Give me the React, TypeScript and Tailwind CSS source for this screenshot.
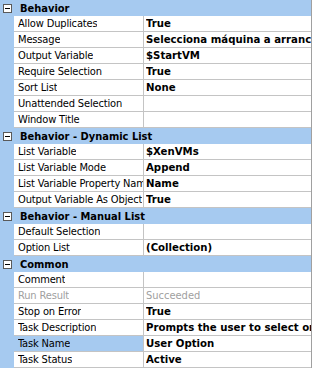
import React from 'react';

type Prop = { name: string; value: string; disabled?: boolean; selected?: boolean };
type Group = { title: string; items: Prop[] };

const groups: Group[] = [
  {
    title: 'Behavior',
    items: [
      { name: 'Allow Duplicates', value: 'True' },
      { name: 'Message', value: 'Selecciona máquina a arrancar' },
      { name: 'Output Variable', value: '$StartVM' },
      { name: 'Require Selection', value: 'True' },
      { name: 'Sort List', value: 'None' },
      { name: 'Unattended Selection', value: '' },
      { name: 'Window Title', value: '' },
    ],
  },
  {
    title: 'Behavior - Dynamic List',
    items: [
      { name: 'List Variable', value: '$XenVMs' },
      { name: 'List Variable Mode', value: 'Append' },
      { name: 'List Variable Property Name', value: 'Name' },
      { name: 'Output Variable As Object', value: 'True' },
    ],
  },
  {
    title: 'Behavior - Manual List',
    items: [
      { name: 'Default Selection', value: '' },
      { name: 'Option List', value: '(Collection)' },
    ],
  },
  {
    title: 'Common',
    items: [
      { name: 'Comment', value: '' },
      { name: 'Run Result', value: 'Succeeded', disabled: true },
      { name: 'Stop on Error', value: 'True' },
      { name: 'Task Description', value: 'Prompts the user to select or enter a value' },
      { name: 'Task Name', value: 'User Option', selected: true },
      { name: 'Task Status', value: 'Active' },
    ],
  },
];

function MinusBox() {
  return (
    <div className="w-[9px] h-[9px] border border-[#5a5a5a] bg-white flex items-center justify-center">
      <div className="w-[5px] h-px bg-black" />
    </div>
  );
}

export default function App() {
  return (
    <div
      className="w-[314px] h-[368px] bg-white overflow-hidden text-[11px] text-black leading-none"
      style={{ fontFamily: 'Tahoma, "DejaVu Sans Condensed", "DejaVu Sans", sans-serif' }}
    >
      <div className="w-[312px] border-r border-[#a0a0a0]">
        {groups.map((g) => (
          <div key={g.title}>
            <div className="h-4 flex items-center bg-[#a6caf0]">
              <div className="w-[14px] pl-[3px] flex items-center">
                <MinusBox />
              </div>
              <span className="pl-[6px] font-bold whitespace-nowrap">{g.title}</span>
            </div>
            {g.items.map((p) => (
              <div key={p.name} className="h-4 flex bg-[#a6caf0]">
                <div className="w-[14px] shrink-0" />
                <div
                  className={
                    'w-[130px] shrink-0 h-4 border-b border-r border-[#c4c4c4] pl-[4px] flex items-center overflow-hidden whitespace-nowrap tracking-[-0.15px] ' +
                    (p.selected ? 'bg-[#a6caf0]' : 'bg-white') +
                    (p.disabled ? ' text-[#a0a0a0]' : '')
                  }
                >
                  <span className="block overflow-hidden">{p.name}</span>
                </div>
                <div
                  className={
                    'flex-1 min-w-0 h-4 bg-white border-b border-[#c4c4c4] pl-[2px] flex items-center overflow-hidden whitespace-nowrap ' +
                    (p.disabled ? 'text-[#a0a0a0]' : 'font-bold text-[11.3px]')
                  }
                >
                  <span className="block overflow-hidden">{p.value}</span>
                </div>
              </div>
            ))}
          </div>
        ))}
      </div>
    </div>
  );
}
